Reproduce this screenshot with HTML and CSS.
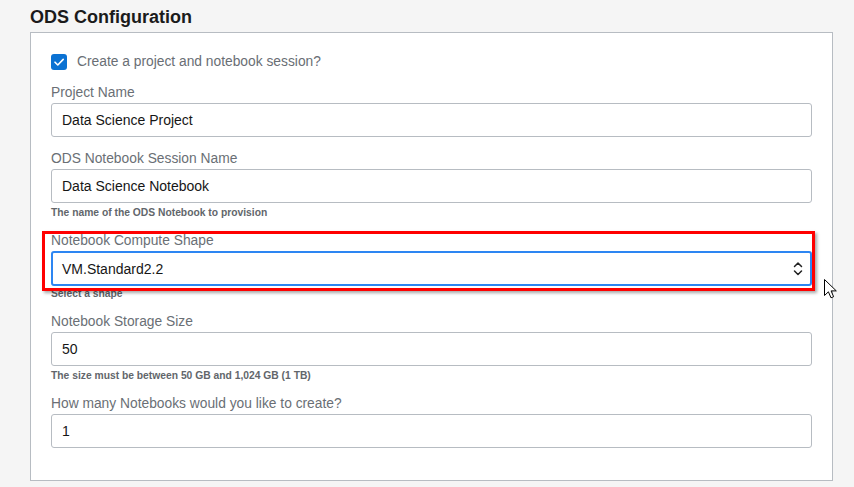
FILE: index.html
```html
<!DOCTYPE html>
<html lang="en">
<head>
<meta charset="utf-8">
<title>ODS Configuration</title>
<link rel="stylesheet" href="styles.css">
</head>
<body>
<div class="page">
  <h2 class="title">ODS Configuration</h2>
  <div class="panel">
    <div class="check-row">
      <span class="checkbox">
        <svg width="16" height="16" viewBox="0 0 16 16"><path d="M4 8.2 L6.8 11 L12.2 5.4" fill="none" stroke="#fff" stroke-width="1.6" stroke-linecap="round" stroke-linejoin="round"/></svg>
      </span>
      <span class="check-label">Create a project and notebook session?</span>
    </div>

    <div class="field first">
      <div class="label">Project Name</div>
      <div class="input">Data Science Project</div>
    </div>

    <div class="field">
      <div class="label">ODS Notebook Session Name</div>
      <div class="input">Data Science Notebook</div>
      <div class="help">The name of the ODS Notebook to provision</div>
    </div>

    <div class="field highlighted">
      <div class="label">Notebook Compute Shape</div>
      <div class="input select">
        <span>VM.Standard2.2</span>
        <svg class="chev" width="10" height="16" viewBox="0 0 10 16"><path d="M1.5 5.5 L5 2 L8.5 5.5 M1.5 10 L5 13.5 L8.5 10" fill="none" stroke="#222" stroke-width="1.5" stroke-linecap="round" stroke-linejoin="round"/></svg>
      </div>
      <div class="help">Select a shape</div>
    </div>

    <div class="field">
      <div class="label">Notebook Storage Size</div>
      <div class="input">50</div>
      <div class="help">The size must be between 50 GB and 1,024 GB (1 TB)</div>
    </div>

    <div class="field">
      <div class="label">How many Notebooks would you like to create?</div>
      <div class="input">1</div>
    </div>
  </div>
</div>
<svg class="cursor" width="14" height="20" viewBox="0 0 14 20"><path d="M0.5 0.5 L0.5 16.5 L4.4 12.8 L7 18.8 L9.6 17.7 L7.1 11.9 L12.3 11.9 Z" fill="#fff" stroke="#000" stroke-width="1" stroke-linejoin="round"/></svg>
</body>
</html>
```
FILE: styles.css
```css
html, body {
  margin: 0;
  padding: 0;
  background: #f5f5f5;
  font-family: "Liberation Sans", Arial, sans-serif;
}
body {
  position: relative;
  width: 854px;
  height: 487px;
  overflow: hidden;
}
.page {
  padding: 7px 0 0 30px;
}
.title {
  margin: 0 0 5px 0;
  font-size: 18px;
  line-height: 20px;
  font-weight: bold;
  color: #1b1b1b;
}
.panel {
  width: 761px;
  background: #fff;
  border: 1px solid #b7bcc2;
  padding: 21px 20px 32px 20px;
}
.check-row {
  display: flex;
  align-items: center;
  height: 16px;
  gap: 10px;
}
.checkbox {
  width: 16px;
  height: 16px;
  border-radius: 3px;
  background: #0b72d3;
  display: flex;
}
.check-label {
  font-size: 13.8px;
  color: #696e74;
  line-height: 16px;
}
.field {
  margin-top: 13px;
  position: relative;
}
.field.first {
  margin-top: 14px;
}
.label {
  font-size: 13.8px;
  line-height: 17px;
  color: #6a6f75;
  margin-bottom: 2px;
}
.input {
  box-sizing: border-box;
  height: 34px;
  border: 1px solid #b7bcc2;
  border-radius: 3px;
  padding: 0 10px;
  font-size: 14px;
  color: #161616;
  display: flex;
  align-items: center;
  background: #fff;
}
.input.select {
  height: 35px;
  border: 2px solid #2d86f2;
  padding: 0 7px 0 9px;
  justify-content: space-between;
}
.chev {
  display: block;
}
.help {
  margin-top: 3px;
  font-size: 10.3px;
  line-height: 13px;
  font-weight: bold;
  color: #62666b;
}
.select + .help {
  margin-top: 1px;
}
.highlighted::after {
  content: "";
  position: absolute;
  top: -1px;
  left: -9px;
  right: -3px;
  height: 60px;
  box-sizing: border-box;
  border: 3px solid #ff0000;
  box-shadow: 2px 2px 3px rgba(0, 0, 0, 0.35);
  pointer-events: none;
}
.cursor {
  position: absolute;
  left: 824px;
  top: 279px;
}
```
